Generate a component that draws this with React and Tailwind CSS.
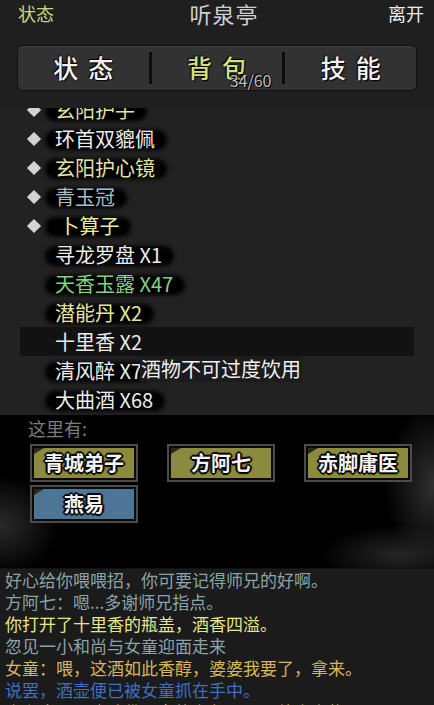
import React from 'react';

const cjk = { fontFamily: '"Noto Sans CJK SC", "Noto Sans", sans-serif' };

const items = [
  { name: '玄阳护手', color: 'text-[#dfe2a4]', bullet: true },
  { name: '环首双貔佩', color: 'text-[#ececec]', bullet: true },
  { name: '玄阳护心镜', color: 'text-[#e2e4a6]', bullet: true },
  { name: '青玉冠', color: 'text-[#a6bfc4]', bullet: true },
  { name: ' 卜算子', color: 'text-[#ecec9c]', bullet: true },
  { name: '寻龙罗盘 X1', color: 'text-[#ececec]' },
  { name: '天香玉露 X47', color: 'text-[#7fd47f]' },
  { name: '潜能丹 X2', color: 'text-[#e6e6a2]' },
  { name: '十里香 X2', color: 'text-[#ececec]', active: true },
  { name: '清风醉 X7', color: 'text-[#ececec]' },
  { name: '大曲酒 X68', color: 'text-[#ececec]' },
];

const npcs = [
  { name: '青城弟子', fill: 'bg-[#8b8a3e]' },
  { name: '方阿七', fill: 'bg-[#8b8a3e]' },
  { name: '赤脚庸医', fill: 'bg-[#8b8a3e]' },
  { name: '燕易', fill: 'bg-[#4d7595]' },
];

const logs = [
  { text: '好心给你喂喂招，你可要记得师兄的好啊。', color: 'text-[#8aa3a9]' },
  { text: '方阿七：嗯...多谢师兄指点。', color: 'text-[#8aa3a9]' },
  { text: '你打开了十里香的瓶盖，酒香四溢。', color: 'text-[#e6e68a]' },
  { text: '忽见一小和尚与女童迎面走来', color: 'text-[#8aa3a9]' },
  { text: '女童：喂，这酒如此香醇，婆婆我要了，拿来。', color: 'text-[#d6b75e]' },
  { text: '说罢，酒壶便已被女童抓在手中。', color: 'text-[#3e6fc2]' },
  { text: '小和尚：阿弥陀佛，女施主怎可强取他人之物。', color: 'text-[#d6b75e]' },
];

const outline =
  '[text-shadow:1px_1px_0_#000,-1px_-1px_0_#000,1px_-1px_0_#000,-1px_1px_0_#000,0_2px_1px_#000,2px_0_1px_#000,0_-2px_1px_#000,-2px_0_1px_#000]';

function ItemRow({ item }) {
  return (
    <div
      className={`relative flex items-center h-[29px] shrink-0 ${
        item.active ? 'bg-[#121212]' : ''
      }`}
    >
      <div className="w-[35px] flex justify-start pl-[9px]">
        {item.bullet && <div className="w-[10px] h-[10px] rotate-45 bg-[#d4d4d4]" />}
      </div>
      <div className="relative">
        {!item.active && (
          <span className="absolute left-[-10px] right-[-12px] top-[6px] bottom-[3px] rounded-full bg-black blur-[2px]" />
        )}
        <span className={`relative text-[20px] leading-[29px] whitespace-pre ${item.color}`}>
          {item.name}
        </span>
      </div>
    </div>
  );
}

function NpcButton({ npc }) {
  return (
    <div className="w-[108px] h-[38px] border-2 border-[#4c4c4c] bg-[#0a0a0a] p-[2px]">
      <div className={`relative h-full ${npc.fill} flex items-center justify-center`}>
        <span className="absolute left-0 top-0 w-0 h-0 border-t-[6px] border-r-[10px] border-t-[#2a2a1a] border-r-transparent" />
        <span className={`text-[20px] font-bold text-[#f4f4f4] ${outline}`}>{npc.name}</span>
      </div>
    </div>
  );
}

export default function App() {
  return (
    <div
      style={cjk}
      className="w-[434px] h-[705px] overflow-hidden bg-[#1f1f1f] flex flex-col select-none"
    >
      {/* header */}
      <div className="h-[45px] shrink-0 grid grid-cols-[1fr_auto_1fr] items-start pl-[18px] pr-[10px]">
        <span className="text-[18px] leading-[26px] text-[#c9d47a]">状态</span>
        <span className="text-[22px] leading-[27px] text-[#cfcfcf] tracking-[1px] pl-[6px]">听泉亭</span>
        <span className="text-[18px] leading-[26px] text-[#ececec] text-right">离开</span>
      </div>

      {/* tabs */}
      <div className="mx-[17px] h-[46px] shrink-0 rounded-[6px] border border-[#101010] bg-[#323232] flex items-center shadow-[inset_0_1px_0_#444]">
        <div className="flex-1 flex justify-center gap-[10px] text-[25px] font-medium text-[#f2f2f2] [text-shadow:1px_1px_1px_#000,-1px_-1px_1px_#000]">
          <span>状</span>
          <span>态</span>
        </div>
        <div className="w-[3px] h-[32px] bg-[#0c0c0c]" />
        <div className="relative flex-1 flex justify-center gap-[10px] text-[25px] font-medium text-[#d6de78] [text-shadow:1px_1px_1px_#000,-1px_-1px_1px_#000]">
          <span>背</span>
          <span>包</span>
          <span className="absolute left-[78px] top-[22px] text-[16px] leading-[18px] font-normal text-[#bdbdbd]">
            34/60
          </span>
        </div>
        <div className="w-[3px] h-[32px] bg-[#0c0c0c]" />
        <div className="flex-1 flex justify-center gap-[10px] text-[25px] font-medium text-[#f2f2f2] [text-shadow:1px_1px_1px_#000,-1px_-1px_1px_#000]">
          <span>技</span>
          <span>能</span>
        </div>
      </div>

      {/* item list */}
      <div className="relative mt-[17px] h-[307px] shrink-0 overflow-hidden bg-[#222222]">
        <div className="flex flex-col mt-[-13px] px-[20px]">
          {items.map((item) => (
            <ItemRow key={item.name} item={item} />
          ))}
        </div>
        <div className="absolute left-[140px] top-[248px] bg-[#1c1c1c] px-[1px] text-[20px] leading-[26px] text-[#f0f0f0]">
          酒物不可过度饮用
        </div>
      </div>

      {/* location */}
      <div className="h-[153px] shrink-0 bg-black bg-[radial-gradient(ellipse_60px_50px_at_0px_110px,#2a2a2a,transparent),radial-gradient(ellipse_50px_80px_at_434px_70px,#303030,transparent),radial-gradient(ellipse_80px_30px_at_400px_140px,#262626,transparent)] px-[28px] pt-[1px]">
        <div className="text-[18px] leading-[24px] text-[#7c7c7c]">这里有:</div>
        <div className="mt-[4px] ml-[2px] grid grid-cols-[108px_108px_108px] gap-x-[29px] gap-y-[3px]">
          {npcs.map((npc) => (
            <NpcButton key={npc.name} npc={npc} />
          ))}
        </div>
      </div>

      {/* log */}
      <div className="flex-1 min-h-0 overflow-hidden bg-[#1b1b1b] border-t border-[#111] px-[5px]">
        {logs.map((l) => (
          <div key={l.text} className={`text-[17px] leading-[22px] whitespace-nowrap ${l.color}`}>
            {l.text}
          </div>
        ))}
      </div>
    </div>
  );
}
